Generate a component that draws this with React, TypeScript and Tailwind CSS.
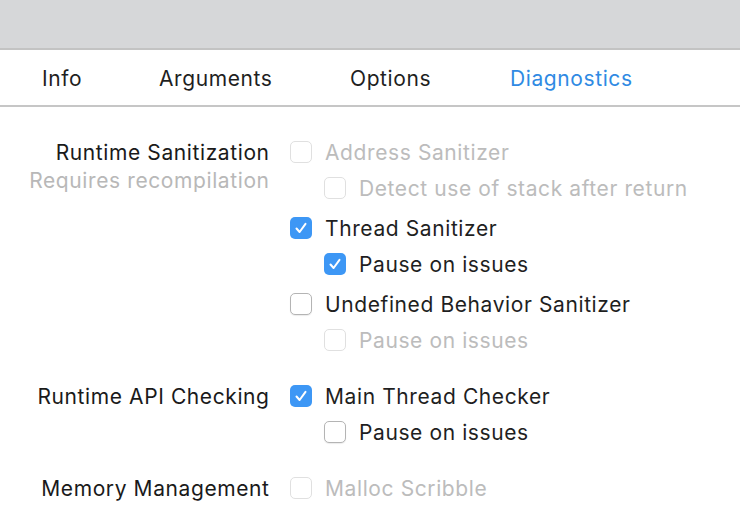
import React from "react";

type Item = { text: string; checked?: boolean; disabled?: boolean; sub?: boolean; gap?: boolean };

function Box({ checked, disabled }: { checked?: boolean; disabled?: boolean }) {
  if (checked) {
    return (
      <div className="w-[22px] h-[22px] rounded-[5px] bg-[#3d97f5] flex items-center justify-center shrink-0">
        <svg width="14" height="14" viewBox="0 0 14 14" fill="none">
          <path d="M2.5 7.5 L5.6 11 L11.5 2.8" stroke="white" strokeWidth="2" strokeLinecap="round" strokeLinejoin="round" />
        </svg>
      </div>
    );
  }
  return (
    <div
      className={
        disabled
          ? "w-[22px] h-[22px] rounded-[5px] bg-white border border-[#e0e0e0] shrink-0"
          : "w-[22px] h-[22px] rounded-[5px] bg-white border border-[#b4b4b4] shadow-[0_1px_1px_rgba(0,0,0,0.08)] shrink-0"
      }
    />
  );
}

function Row({ item }: { item: Item }) {
  return (
    <div className={`h-[36px] flex items-center gap-[13px] ${item.sub ? "pl-[34px]" : ""} ${item.gap ? "mt-[4px]" : ""}`}>
      <Box checked={item.checked} disabled={item.disabled} />
      <span className={`pt-[1px] ${item.disabled ? "text-[#bcbcbc]" : "text-[#1f1f1f]"}`}>{item.text}</span>
    </div>
  );
}

function Group({ label, sub, items, first }: { label: string; sub?: string; items: Item[]; first?: boolean }) {
  return (
    <div className={`flex ${first ? "" : "mt-[20px]"}`}>
      <div className="w-[269px] shrink-0 text-right pt-[5px] leading-[28px] whitespace-nowrap">
        <div className="text-[#1a1a1a] mr-[-0.6px]">{label}</div>
        {sub && <div className="text-[#b8b8b8] mr-[-0.6px]">{sub}</div>}
      </div>
      <div className="ml-[21px] flex flex-col">
        {items.map((it, i) => (
          <Row key={i} item={it} />
        ))}
      </div>
    </div>
  );
}

export default function App() {
  return (
    <div
      className="w-[740px] h-[512px] bg-white overflow-hidden text-[21px] tracking-[0.6px]"
      style={{ fontFamily: "Inter, 'Noto Sans', sans-serif" }}
    >
      <div className="h-[50px] bg-[#d6d7d9] border-b-2 border-[#c3c3c3]" />
      <div className="h-[57px] border-b-2 border-[#c6c6c6] flex items-center pl-[42px] pt-[2px]">
        <div className="w-[117px] text-[#1f1f1f]">Info</div>
        <div className="w-[191px] text-[#1f1f1f]">Arguments</div>
        <div className="w-[160px] text-[#1f1f1f]">Options</div>
        <div className="text-[#2f8ae3]">Diagnostics</div>
      </div>
      <div className="pt-[27px]">
        <Group
          first
          label="Runtime Sanitization"
          sub="Requires recompilation"
          items={[
            { text: "Address Sanitizer", disabled: true },
            { text: "Detect use of stack after return", disabled: true, sub: true },
            { text: "Thread Sanitizer", checked: true, gap: true },
            { text: "Pause on issues", checked: true, sub: true },
            { text: "Undefined Behavior Sanitizer", gap: true },
            { text: "Pause on issues", disabled: true, sub: true },
          ]}
        />
        <Group
          label="Runtime API Checking"
          items={[
            { text: "Main Thread Checker", checked: true },
            { text: "Pause on issues", sub: true },
          ]}
        />
        <Group label="Memory Management" items={[{ text: "Malloc Scribble", disabled: true }]} />
      </div>
    </div>
  );
}
